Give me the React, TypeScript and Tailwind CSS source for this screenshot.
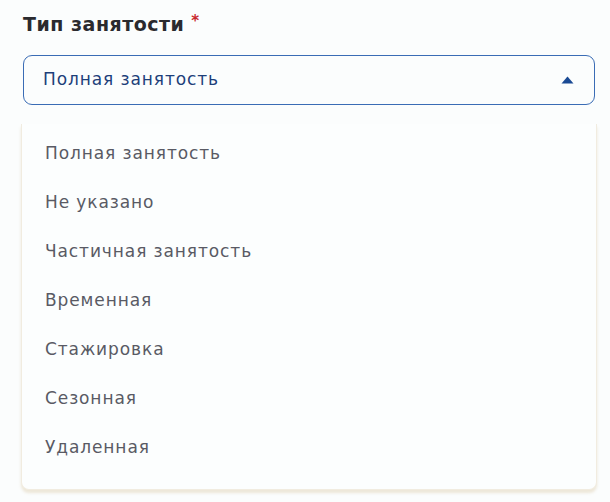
export default function App() {
  const options = [
    "Полная занятость",
    "Не указано",
    "Частичная занятость",
    "Временная",
    "Стажировка",
    "Сезонная",
    "Удаленная",
  ];

  return (
    <main
      className="w-[610px] h-[502px] bg-[#fbfdfd] overflow-hidden pl-[23px] pr-[15px] pt-[10px]"
      style={{ fontFamily: '"DejaVu Sans", "Noto Sans", sans-serif' }}
    >
      <label className="flex items-center gap-[7px] text-[19px] font-bold tracking-[0.5px] text-[#2a2a2e] leading-[28px]">
        Тип занятости
        <span className="text-[#c8282d] text-[15px] leading-[15px] -mt-[6px]">*</span>
      </label>

      <div className="mt-[17px] h-[50px] w-[572px] rounded-[9px] border border-[#3a6cb5] flex items-center justify-between pl-[19px] pr-[20px]">
        <span className="text-[17px] tracking-[0.9px] text-[#1d3f7a]">Полная занятость</span>
        <svg width="13" height="8" viewBox="0 0 13 8">
          <path d="M6.5 0.5 L12.5 7.5 L0.5 7.5 Z" fill="#1a4a94" />
        </svg>
      </div>

      <div className="mt-[19px] -ml-[2px] w-[576px] h-[366px] rounded-b-[8px] bg-[#fcfefe] border border-t-0 border-[#f1ece0] shadow-[0_3px_3px_rgba(220,205,170,0.45)] pt-[5px]">
        {options.map((o) => (
          <div
            key={o}
            className="h-[49px] flex items-center pl-[23px] text-[17px] tracking-[0.9px] text-[#595a64]"
          >
            {o}
          </div>
        ))}
      </div>
    </main>
  );
}
